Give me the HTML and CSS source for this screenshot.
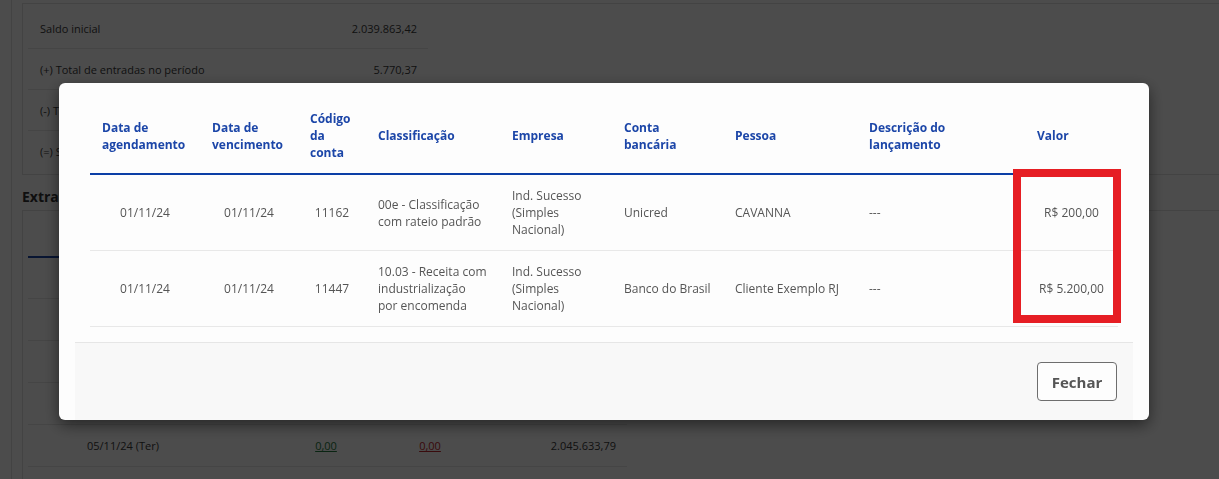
FILE: index.html
```html
<!DOCTYPE html>
<html lang="pt-BR">
<head>
<meta charset="utf-8">
<title>Lançamentos</title>
<link rel="stylesheet" href="styles.css">
</head>
<body>
<div class="page">
  <div class="shell">
    <section class="card summary">
      <div class="sum-row"><span>Saldo inicial</span><span>2.039.863,42</span></div>
      <div class="sum-row"><span>(+) Total de entradas no período</span><span>5.770,37</span></div>
      <div class="sum-row"><span>(-) Total de saídas no período</span><span>0,00</span></div>
      <div class="sum-row"><span>(=) Saldo final</span><span>2.045.633,79</span></div>
    </section>
    <h2 class="section-title">Extrato diário</h2>
    <section class="card extrato">
      <div class="tabs"><span class="tab active">Diário</span><span class="tab">Mensal</span></div>
      <div class="ext-row ext-head"><span>Data</span><span class="c">Entradas</span><span class="c">Saídas</span><span class="r">Saldo</span></div>
      <div class="ext-row"><span>01/11/24 (Sex)</span><span class="c"><a class="in">5.400,00</a></span><span class="c"><a class="out">0,00</a></span><span class="r">2.045.263,42</span></div>
      <div class="ext-row"><span>02/11/24 (Sáb)</span><span class="c"><a class="in">0,00</a></span><span class="c"><a class="out">0,00</a></span><span class="r">2.045.263,42</span></div>
      <div class="ext-row"><span>04/11/24 (Seg)</span><span class="c"><a class="in">370,37</a></span><span class="c"><a class="out">0,00</a></span><span class="r">2.045.633,79</span></div>
      <div class="ext-row"><span>05/11/24 (Ter)</span><span class="c"><a class="in">0,00</a></span><span class="c"><a class="out">0,00</a></span><span class="r">2.045.633,79</span></div>
    </section>
  </div>
</div>

<div class="overlay"></div>

<div class="modal">
  <div class="modal-body">
    <table class="lanc">
      <colgroup>
        <col class="w1"><col class="w2"><col class="w3"><col class="w4"><col class="w5"><col class="w6"><col class="w7"><col class="w8"><col class="w9">
      </colgroup>
      <thead>
        <tr>
          <th>Data de<br>agendamento</th>
          <th>Data de<br>vencimento</th>
          <th>Código<br>da<br>conta</th>
          <th>Classificação</th>
          <th>Empresa</th>
          <th>Conta<br>bancária</th>
          <th>Pessoa</th>
          <th>Descrição do<br>lançamento</th>
          <th>Valor</th>
        </tr>
      </thead>
      <tbody>
        <tr>
          <td class="c">01/11/24</td>
          <td class="c">01/11/24</td>
          <td class="c">11162</td>
          <td>00e - Classificação com rateio padrão</td>
          <td>Ind. Sucesso (Simples Nacional)</td>
          <td class="nw">Unicred</td>
          <td>CAVANNA</td>
          <td>---</td>
          <td class="c">R$ 200,00</td>
        </tr>
        <tr>
          <td class="c">01/11/24</td>
          <td class="c">01/11/24</td>
          <td class="c">11447</td>
          <td>10.03 - Receita com industrialização por encomenda</td>
          <td>Ind. Sucesso (Simples Nacional)</td>
          <td class="nw">Banco do Brasil</td>
          <td>Cliente Exemplo RJ</td>
          <td>---</td>
          <td class="c">R$ 5.200,00</td>
        </tr>
      </tbody>
    </table>
  </div>
  <div class="modal-footer">
    <button class="btn" type="button">Fechar</button>
  </div>
</div>

<div class="highlight"></div>
</body>
</html>
```

FILE: styles.css
```css
* { box-sizing: border-box; }

html, body {
  margin: 0;
  padding: 0;
  width: 1219px;
  height: 479px;
  overflow: hidden;
  background: #ffffff;
  font-family: "Open Sans", "Noto Sans", "Liberation Sans", sans-serif;
  color: #444;
}

/* ---------- underlying page ---------- */
.page {
  padding-left: 11px;
}
.shell {
  border-left: 1px solid #e2e2e2;
  padding: 3px 0 0 10px;
  height: 479px;
  overflow: hidden;
}
.card {
  border: 1px solid #e2e2e2;
  background: #fff;
  width: 1300px;
}
.summary {
  padding: 4px 0 2px 5px;
}
.sum-row {
  width: 400px;
  height: 41px;
  display: flex;
  align-items: center;
  justify-content: space-between;
  padding: 0 11px 0 12px;
  font-size: 11px;
  color: #3a3a3a;
  border-bottom: 1px solid #e6e6e6;
}
.sum-row:last-child { border-bottom: none; }

.section-title {
  margin: 12px 0 3px 0;
  font-size: 14px;
  line-height: 20px;
  font-weight: 700;
  color: #333;
}

.extrato {
  padding-left: 5px;
  min-height: 320px;
}
.tabs {
  height: 47px;
  display: flex;
  align-items: flex-end;
}
.tab {
  width: 110px;
  height: 47px;
  display: flex;
  align-items: center;
  justify-content: center;
  font-size: 12px;
  color: #666;
}
.tab.active {
  border-bottom: 2px solid #1c46a8;
  color: #1c46a8;
  font-weight: 700;
}
.ext-row {
  width: 599px;
  height: 42px;
  display: grid;
  grid-template-columns: 189px 100px 108px 1fr;
  align-items: center;
  padding: 0 11px 0 59px;
  font-size: 11px;
  border-bottom: 1px solid #e6e6e6;
  color: #3a3a3a;
}
.ext-head {
  height: 41px;
  font-weight: 700;
}
.ext-row .c { text-align: center; }
.ext-row .r { text-align: right; }
.ext-row a { text-decoration: underline; }
.ext-row a.in { color: #1e7a3c; }
.ext-row a.out { color: #c0262c; }

/* ---------- overlay & modal ---------- */
.overlay {
  position: fixed;
  inset: 0;
  background: rgba(0, 0, 0, 0.7);
}

.modal {
  position: fixed;
  top: 83px;
  left: 59px;
  width: 1090px;
  height: 337px;
  background: #fdfdfd;
  border-radius: 6px;
  box-shadow: 0 5px 15px rgba(0, 0, 0, 0.5);
  display: flex;
  flex-direction: column;
}
.modal-body {
  padding: 15px 31px 15px 31px;
}
.lanc {
  width: 1028px;
  table-layout: fixed;
  border-collapse: collapse;
  font-size: 12px;
  line-height: 17px;
}
.w1 { width: 110px; }
.w2 { width: 98px; }
.w3 { width: 68px; }
.w4 { width: 134px; }
.w5 { width: 112px; }
.w6 { width: 111px; }
.w7 { width: 134px; }
.w8 { width: 168px; }
.w9 { width: 93px; }

.lanc th {
  text-align: left;
  vertical-align: middle;
  padding: 12px 12px;
  font-weight: 700;
  color: #1c46a8;
  border-bottom: 2px solid #0b3ea6;
}
.lanc td {
  text-align: left;
  vertical-align: middle;
  padding: 12px 12px;
  color: #555;
  border-bottom: 1px solid #e8e8e8;
}
.lanc td.c { text-align: center; }
.lanc td.nw { white-space: nowrap; }

.modal-footer {
  margin: 0 16px;
  flex: 1;
  border-top: 1px solid #e6e6e6;
  background: #f8f8f8;
  display: flex;
  justify-content: flex-end;
  align-items: center;
  padding: 0 16px;
}
.btn {
  width: 80px;
  height: 39px;
  border: 1px solid #6e6e6e;
  border-radius: 4px;
  background: #fdfdfd;
  font-family: "Open Sans", "Noto Sans", sans-serif;
  font-size: 15px;
  font-weight: 700;
  color: #555;
  padding: 0;
}

/* annotation box */
.highlight {
  position: fixed;
  left: 1013px;
  top: 169px;
  width: 108px;
  height: 154px;
  border: 8px solid #e61e24;
}
```
